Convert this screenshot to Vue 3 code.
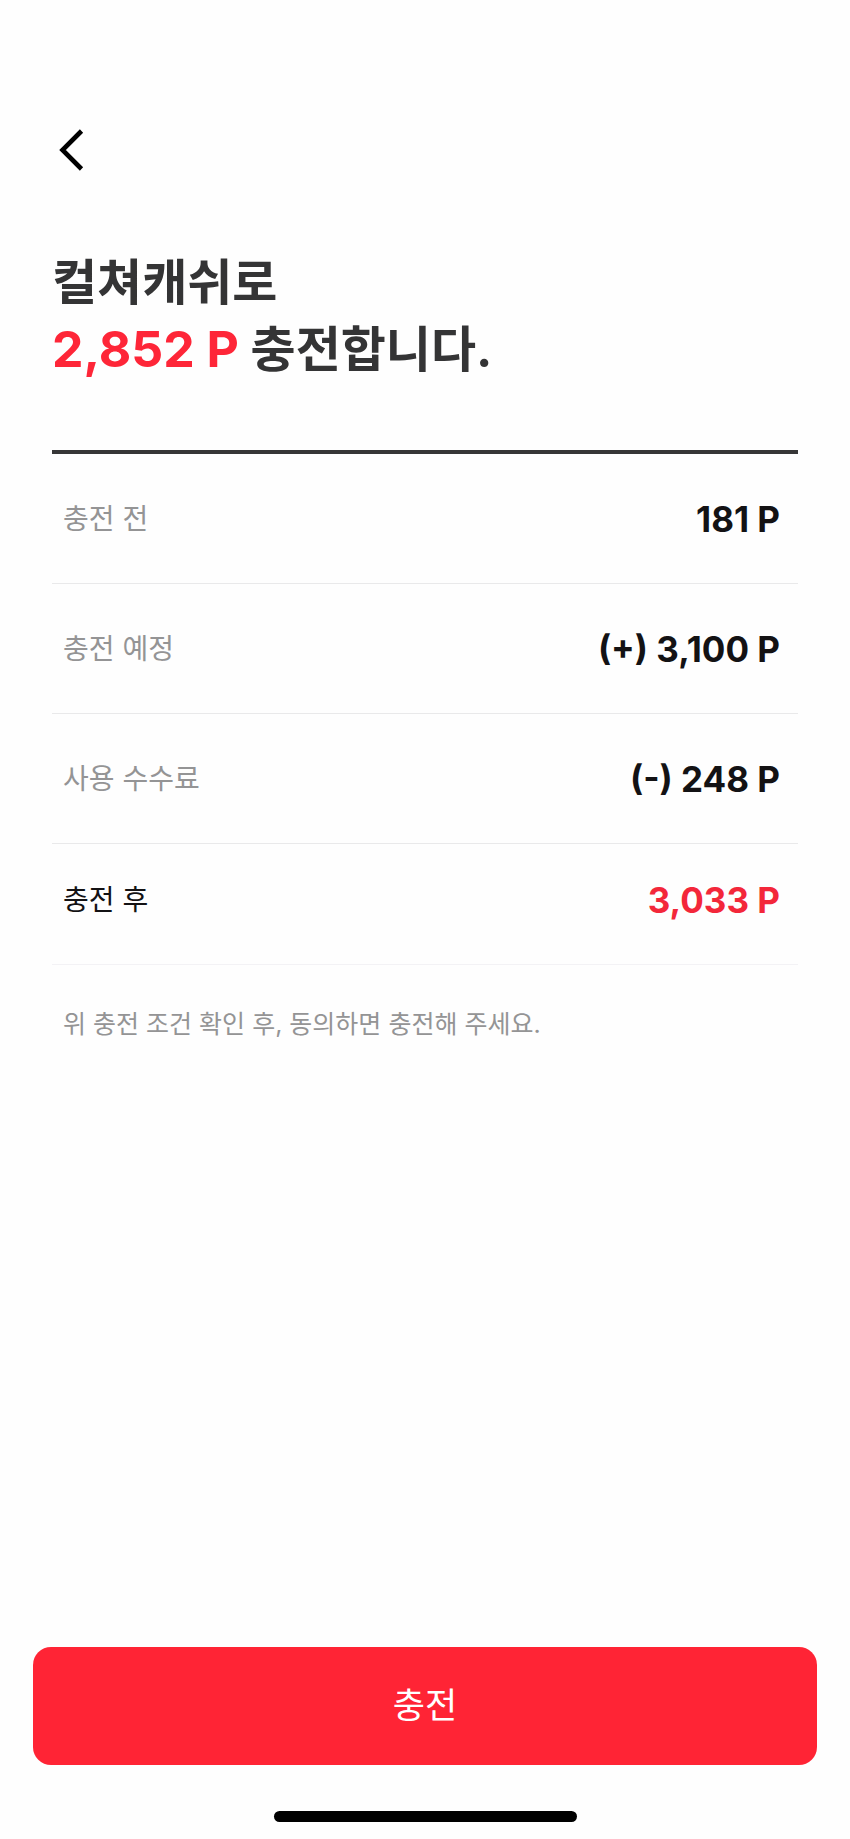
<script setup>
import { computed, ref } from "vue";

const before = ref(181);
const amount = ref(3100);
const fee = ref(248);

const charged = computed(() => amount.value - fee.value);
const after = computed(() => before.value + charged.value);

const rows = computed(() => [
  { label: "충전 전", value: point(before.value) },
  { label: "충전 예정", value: `(+) ${point(amount.value)}` },
  { label: "사용 수수료", value: `(-) ${point(fee.value)}` },
  { label: "충전 후", value: point(after.value), total: true },
]);

function point(val) {
  return `${val.toLocaleString("en-US")} P`;
}

function goBack() {
  window.history.back();
}
</script>

<template>
  <div class="page">
    <header class="header">
      <button class="back" type="button" aria-label="뒤로" @click="goBack">
        <svg width="26" height="42" viewBox="0 0 26 42" fill="none">
          <path d="M23.5 2L4.5 21L23.5 40" stroke="#000" stroke-width="4.6" />
        </svg>
      </button>
    </header>

    <main class="content">
      <h1 class="title">
        컬쳐캐쉬로<br />
        <span class="point">{{ point(charged) }}</span> 충전합니다.
      </h1>

      <table class="summary">
        <tbody>
          <tr v-for="row in rows" :key="row.label" :class="{ total: row.total }">
            <th scope="row">{{ row.label }}</th>
            <td>{{ row.value }}</td>
          </tr>
        </tbody>
      </table>

      <p class="note">위 충전 조건 확인 후, 동의하면 충전해 주세요.</p>
    </main>

    <footer class="footer">
      <button class="submit" type="button">충전</button>
      <div class="home-bar"></div>
    </footer>
  </div>
</template>

<style>
body {
  background: #fefefe;
}
</style>

<style scoped>
.page {
  display: flex;
  flex-direction: column;
  box-sizing: border-box;
  min-height: 100vh;
  color: #131214;
  font-family: Inter, "Noto Sans CJK KR", sans-serif;
}

.header {
  padding: 129px 52px 0;
}

.back {
  display: block;
  padding: 0 6px;
  border: 0;
  background: none;
  cursor: pointer;
}

.back svg {
  display: block;
}

.content {
  padding: 0 52px;
}

.title {
  margin: 78px 0 67px;
  color: #343435;
  font-size: 49px;
  font-weight: 700;
  line-height: 67px;
}

.point {
  color: #fe2638;
  font-size: 50px;
  line-height: 1;
}

.summary {
  width: 100%;
  border-top: 4px solid #363637;
  border-spacing: 0;
}

.summary th,
.summary td {
  height: 129px;
  padding: 0 11px;
  border-bottom: 1px solid #e9e9ea;
  line-height: 40px;
}

.summary th {
  color: #949495;
  font-size: 28px;
  font-weight: 400;
  text-align: left;
}

.summary td {
  padding-right: 18px;
  font-size: 35px;
  font-weight: 700;
  text-align: right;
}

.summary .total th,
.summary .total td {
  height: 112px;
  padding-bottom: 8px;
  border-color: #f3f2f5;
}

.summary .total th {
  color: #131214;
}

.summary .total td {
  color: #f3273a;
}

.note {
  margin: 41px 0;
  padding: 0 11px;
  color: #949495;
  font-size: 25px;
  line-height: 36px;
}

.footer {
  margin-top: auto;
  padding: 0 33px 17px;
}

.submit {
  display: block;
  width: 100%;
  height: 118px;
  padding: 0 0 8px;
  border: 0;
  border-radius: 18px;
  background: #ff2435;
  color: #fff;
  font-family: inherit;
  font-size: 35px;
  cursor: pointer;
}

.home-bar {
  width: 303px;
  height: 11px;
  margin: 46px auto 0;
  border-radius: 6px;
  background: #000;
}
</style>
